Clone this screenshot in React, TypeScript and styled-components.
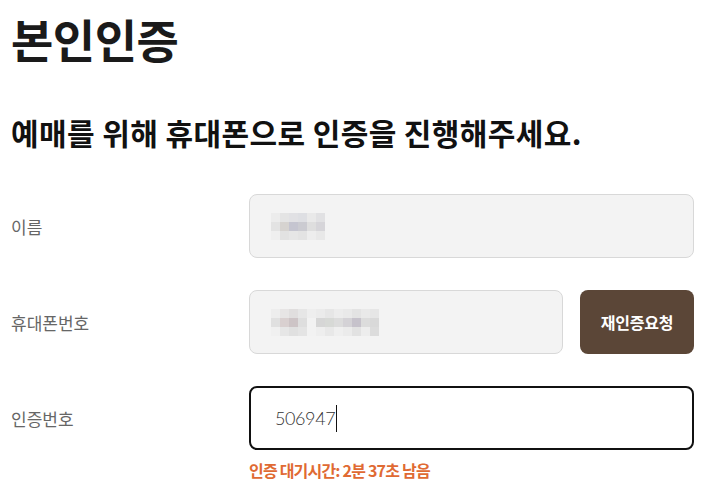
import React from 'react'
import styled, { createGlobalStyle } from 'styled-components'

const GlobalStyle = createGlobalStyle`
  html, body {
    margin: 0;
    padding: 0;
    background: #fff;
    font-family: "Noto Sans CJK KR", "Noto Sans", sans-serif;
  }
`;

const Page = styled.div`
  width: 708px;
  box-sizing: border-box;
  padding: 0 14px 0 11px;
`;

const Title = styled.h1`
  margin: 0;
  font-size: 46px;
  line-height: 76px;
  font-weight: 700;
  color: #1a1a1a;
  letter-spacing: -0.5px;
`;

const Subtitle = styled.h2`
  margin: 36px 0 0;
  font-size: 30px;
  line-height: 40px;
  font-weight: 600;
  color: #111;
  letter-spacing: 0.4px;
`;

const Form = styled.div`
  margin-top: 42px;
  display: flex;
  flex-direction: column;
  gap: 32px;
`;

const Row = styled.div`
  display: grid;
  grid-template-columns: 238px 1fr;
  align-items: start;
`;

const Label = styled.label`
  height: 64px;
  display: flex;
  align-items: center;
  font-size: 17px;
  font-weight: 400;
  color: #666;
`;

const Field = styled.div`
  display: flex;
  flex-direction: column;
`;

const InputLine = styled.div`
  display: flex;
  gap: 17px;
`;

const Box = styled.div<{ $active?: boolean }>`
  flex: 1 1 auto;
  min-width: 0;
  height: 64px;
  box-sizing: border-box;
  border-radius: 8px;
  display: flex;
  align-items: center;
  padding-left: ${(p) => (p.$active ? '24px' : '21px')};
  background: ${(p) => (p.$active ? '#fff' : '#f3f3f3')};
  border: ${(p) => (p.$active ? '2px solid #111' : '1px solid #d8d8d8')};
`;

const Code = styled.span`
  font-family: Lato, "Noto Sans", sans-serif;
  font-size: 18px;
  font-weight: 300;
  color: #333;
  letter-spacing: -0.4px;
`;

const Caret = styled.span`
  display: inline-block;
  width: 1px;
  height: 27px;
  background: #111;
  margin-left: 1px;
`;

const Mosaic = styled.div<{ $cols: number }>`
  display: grid;
  grid-template-columns: repeat(${(p) => p.$cols}, 9px);
  grid-auto-rows: 9px;
`;

const Cell = styled.span<{ $c: string }>`
  background: ${(p) => p.$c};
`;

const ResendButton = styled.button`
  flex: 0 0 114px;
  height: 64px;
  border: none;
  border-radius: 8px;
  background: #5b4637;
  color: #fff;
  font-family: "Noto Sans CJK KR", sans-serif;
  font-size: 16px;
  font-weight: 700;
  letter-spacing: -0.2px;
  cursor: pointer;
`;

const Timer = styled.p`
  margin: 8px 0 0;
  font-size: 16px;
  line-height: 24px;
  font-weight: 700;
  color: #e06a33;
  letter-spacing: -0.8px;
`;

const nameCells = [
  '#ececec', '#e4e4e4', '#e1e1e4', '#dedfe3', '#e9e9e9', '#e1e1e3',
  '#e3e3e3', '#d6d3d0', '#c5c5d0', '#cbcbd1', '#dedede', '#d6d5d9',
  '#efefef', '#e2e2e2', '#e6e6e6', '#e3e3e3', '#ededed', '#e8e8e8',
];

const phoneCells = [
  '#ededed', '#e7e5e5', '#e0dede', '#e6e6e6', '#eeeeee', '#ebebeb', '#e6e6e6', '#ececec', '#e9e9e9', '#e3e3e3', '#e9e9e9', '#e6e6e6',
  '#e0e0e0', '#d9d0d0', '#cdc4c6', '#dedede', '#f2f2f2', '#d6d6d6', '#d7d9d6', '#dcdcdc', '#d4d2d6', '#c6c2cb', '#dcdcdc', '#d9d9d9',
  '#f0f0f0', '#e6e6e6', '#e0e0e0', '#e4e4e4', '#f2f2f2', '#eeeeee', '#e8e8e8', '#efefef', '#ebebeb', '#e2e2e2', '#ededed', '#dcdcdc',
];

const App = () => {
  return (
    <Page>
      <GlobalStyle />
      <Title>본인인증</Title>
      <Subtitle>예매를 위해 휴대폰으로 인증을 진행해주세요.</Subtitle>
      <Form>
        <Row>
          <Label>이름</Label>
          <Field>
            <Box>
              <Mosaic $cols={6}>
                {nameCells.map((c, i) => <Cell key={i} $c={c} />)}
              </Mosaic>
            </Box>
          </Field>
        </Row>
        <Row>
          <Label>휴대폰번호</Label>
          <Field>
            <InputLine>
              <Box>
                <Mosaic $cols={12}>
                  {phoneCells.map((c, i) => <Cell key={i} $c={c} />)}
                </Mosaic>
              </Box>
              <ResendButton>재인증요청</ResendButton>
            </InputLine>
          </Field>
        </Row>
        <Row>
          <Label>인증번호</Label>
          <Field>
            <Box $active>
              <Code>506947</Code>
              <Caret />
            </Box>
            <Timer>인증 대기시간: 2분 37초 남음</Timer>
          </Field>
        </Row>
      </Form>
    </Page>
  )
}

export default App
